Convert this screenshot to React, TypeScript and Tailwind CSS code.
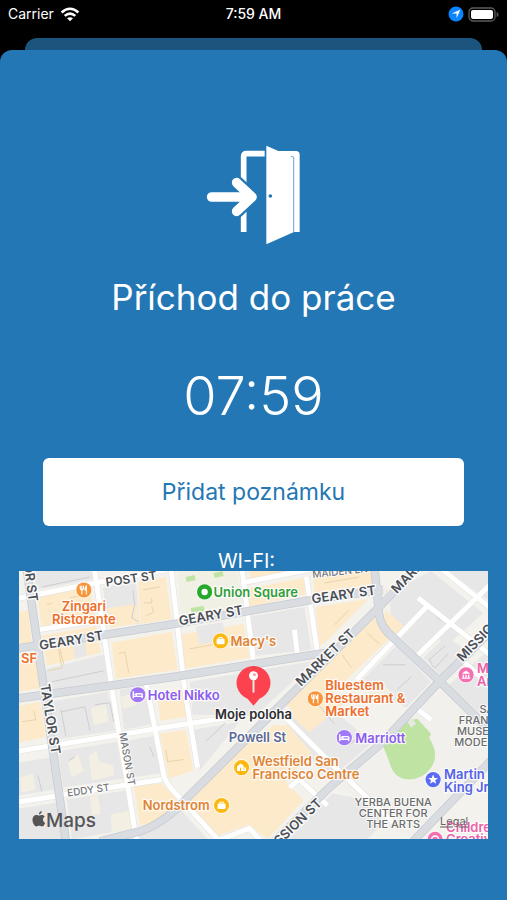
import type { ReactNode } from "react";

const roadLabels = [
  { text: "POST ST", x: 132, y: 583, angle: -8, size: 12 },
  { text: "GEARY ST", x: 72, y: 645, angle: -9, size: 13 },
  { text: "GEARY ST", x: 212, y: 620, angle: -10, size: 13 },
  { text: "GEARY ST", x: 345, y: 599, angle: -8, size: 13 },
  { text: "TAYLOR ST", x: 46, y: 720, angle: 81, size: 13 },
  { text: "TAYLOR ST", x: 24, y: 567, angle: 82, size: 13 },
  { text: "MARKET ST", x: 329, y: 661, angle: -44, size: 13 },
  { text: "MARKET ST", x: 424, y: 567, angle: -46, size: 13 },
  { text: "MISSION ST", x: 490, y: 635, angle: -46, size: 13 },
  { text: "MISSION ST", x: 296, y: 831, angle: -44, size: 13 },
];

const smallRoadLabels = [
  { text: "MASON ST", x: 124, y: 760, angle: 80, size: 10 },
  { text: "EDDY ST", x: 89, y: 794, angle: -8, size: 10 },
  { text: "MAIDEN LN", x: 341, y: 575, angle: -6, size: 10 },
];

const majorRoads = [
  "M27 571L66 842",
  "M15 649L175 624L330 597L384 590",
  "M15 699L175 677L332 652",
  "M100 842L140 832Q165 824 190 796L380 607L418 567",
  "M375 565L379 605Q379 622 388 632L441 682L495 735",
  "M493 630L440 682L383 743L330 788L272 845",
  "M493 760L414 842",
];

const minorRoads = [
  "M15 599L95 583L165 570",
  "M94 565L113 695L137 842",
  "M146 681L164 775Q166 784 176 794L220 842",
  "M171 565L185 690L198 768",
  "M242 565L254 662",
  "M307 577L318 652",
  "M242 583L312 569",
  "M295 630L298 655",
  "M15 752L175 726L235 717",
  "M15 803L162 780",
  "M38 630L102 620",
  "M284 716L330 762L370 800L395 824",
  "M357 680L430 604",
  "M419 598L495 658",
  "M440 567L495 611",
  "M418 656L495 581",
  "M463 660L495 690",
  "M414 706L432 720",
  "M290 788L300 780L328 806",
  "M216 842L250 829L262 842",
];

const MapPin = ({ x, y, color, children }: { x: number; y: number; color: string; children: ReactNode }) => (
  <g transform={`translate(${x} ${y})`}>
    <circle r="8.5" fill="#fff" opacity="0.7" />
    <circle r="7.6" fill={color} />
    {children}
  </g>
);

const ForkKnife = () => (
  <g stroke="#fff" strokeLinecap="round" fill="none">
    <path d="M-3.6 -4v2.6q0 1.2 1.6 1.2T-.4 -1.4V-4M-2 -4V4" strokeWidth="1.1" />
    <path d="M2.5 4V-4q-1.6 1-1.4 4h1.4" fill="#fff" strokeWidth="1.1" />
  </g>
);

const Bag = () => (
  <g>
    <rect x="-4" y="-2" width="8" height="5.4" rx="1" fill="#fff" />
    <path d="M-1.8 -2v-1.3h3.6v1.3" fill="none" stroke="#fff" />
  </g>
);

const Bed = () => (
  <path d="M-4.5 -3v6M-4.5 1.6h9M4.5 2.8V0q0-1-1-1h-5v2M-3 -.4h.3" stroke="#fff" strokeWidth="1.4" strokeLinecap="round" fill="none" />
);

const Museum = () => (
  <path d="M-4.3 -1L0 -4.2L4.3 -1ZM-3.4 0h1.5v3h-1.5zM-.7 0h1.4v3h-1.4zM1.9 0h1.5v3h-1.5zM-4.3 3h8.6v1h-8.6z" fill="#fff" />
);

const StreetMap = () => (
  <svg viewBox="19 571 470 269" className="block w-full font-['Inter','Liberation_Sans',sans-serif]" role="group" aria-label="Moje poloha">
    <rect x="19" y="571" width="470" height="269" fill="#f4f2ed" />

    {/* blocks */}
    <g fill="#e8e7e8">
      <path d="M33 571H91L94 579L36 590Z" />
      <path d="M103 588L136 580L140 625L108 618Z" />
      <path d="M46 669L104 655L109 682L43 692Z" />
      <path d="M50 702L108 692L115 731L55 740Z" />
      <path d="M120 690L143 686L154 724L124 730Z" />
      <path d="M58 752L117 742L124 779L63 788Z" />
      <path d="M126 741L156 736L161 774L131 778Z" />
      <path d="M19 763L50 758L55 790L19 796Z" />
      <path d="M19 809L57 803L62 840H19Z" />
      <path d="M67 800L126 791L132 829L72 840Z" />
      <path d="M250 617L305 607L312 650L257 656Z" />
      <path d="M190 682L316 661L256 716L193 715Z" />
      <path d="M194 730L240 722L200 771Z" />
      <path d="M391 600L409 583L432 571L484 613L448 646L420 624L392 630Z" />
      <path d="M448 571H489V600Z" />
      <path d="M402 638L428 612L449 632L420 657Z" />
      <path d="M362 681L397 646L432 682L407 708Z" />
      <path d="M424 658L446 637L476 655L442 676Z" />
      <path d="M450 685L489 651V716L480 713Z" />
      <path d="M290 712L310 690L373 743L330 780L287 730Z" />
      <path d="M169 797L208 840H116L150 833Z" />
      <path d="M333 794L361 799L385 822L368 840H287Z" />
    </g>
    <g fill="#f1f0ed">
      <path d="M416 712L445 689L489 733V756L412 838L380 826L396 811L338 790L388 744Z" />
    </g>
    <g fill="#f3efe2">
      <path d="M68 764L78 755L84 771L72 778Z" />
      <path d="M89 756L97 751L99 762L113 766L115 776L92 781Z" />
      <path d="M91 708L106 705L109 722L94 725Z" />
      <path d="M90 797L98 796L101 814L92 816Z" />
      <path d="M111 815L130 811L132 829L112 833Z" />
      <path d="M20 778L33 774L36 790L22 793Z" />
      <path d="M121 697L133 694L137 705L124 709Z" />
      <path d="M365 695L380 680L392 692L378 704Z" />
    </g>
    <g fill="#fceacb">
      <path d="M37 597L89 586L95 618L42 628Z" />
      <path d="M19 612L28 610L32 645L19 647Z" />
      <path d="M19 658L36 655L41 688L19 692Z" />
      <path d="M42 636L96 626L101 653L47 666Z" />
      <path d="M138 582L166 577L172 619L141 624Z" />
      <path d="M108 608L137 604L140 623L111 628Z" />
      <path d="M112 643L172 632L178 670L116 679Z" />
      <path d="M179 635L244 624L250 658L184 669Z" />
      <path d="M247 589L304 578L307 594L249 607Z" />
      <path d="M250 571H300L250 579Z" />
      <path d="M314 577L371 571L373 584L315 595Z" />
      <path d="M316 607L369 599L327 642L320 647Z" />
      <path d="M19 706L40 702L46 737L19 743Z" />
      <path d="M157 694L182 689L187 717L161 721Z" />
      <path d="M160 734L186 730L194 771L169 779Z" />
      <path d="M134 786L162 784L177 800L161 821L140 826Z" />
      <path d="M376 614L392 637L322 704L289 707L284 702Z" />
      <path d="M386 610L407 628L397 640L385 627Z" />
      <path d="M275 725L289 726L312 753L286 781L304 801L268 840L250 825L216 837L180 803L250 742Z" />
      <path d="M290 701L318 679L345 703L310 733L291 715Z" />
    </g>
    <path d="M178 571H237L245 613L182 624Z" fill="#f1f0e4" />
    <path d="M196 627L223 622L227 640L200 645Z" fill="#e8e7e8" />
    <path d="M72 637L84 635L87 656L75 659Z" fill="#e8e7e8" />
    <g fill="#bfe3a2">
      <path d="M186 577L195 575L196 580L187 582Z" />
      <path d="M214 573L223 571L224 576L215 578Z" />
      <path d="M191 608L204 606L205 611L192 613Z" />
      <path d="M408 721L418 719L432 734L430 738Q441 755 432 768Q424 780 409 780Q394 779 390 762L384 747Z" />
    </g>
    <path d="M408 722L413 719L417 724L412 728Z" fill="#e6e8e2" />

    {/* building outlines */}
    <g fill="none" stroke="#e9d3aa" strokeWidth="1">
      <path d="M58 645L62 668L48 671M59 646L64 665" />
      <path d="M143 590L160 587M144 603H152V598M146 616L154 612L152 606" />
      <path d="M119 654L125 652L129 673M70 598L84 595M47 605L52 603" />
      <path d="M190 649L240 640M258 594L285 590M325 583L360 577" />
      <path d="M368 633L380 644M343 655L352 668M166 750L168 762L184 760" />
      <path d="M22 722L36 720L34 711M335 625L350 610" />
    </g>
    <g fill="none" stroke="#cdcdd0" strokeWidth="1">
      <path d="M61 710L66 736M62 712L85 707L90 731M95 705L110 703L114 722M42 587L90 577" />
      <path d="M133 590L135 604L132 618L139 622M38 776L42 792M69 761L75 757" />
      <path d="M432 665L436 668L449 654M433 664L430 660L446 646M384 665H406M435 614L442 621" />
      <path d="M452 688L474 712M410 622L420 613M454 579L478 600M52 682L104 671M150 747L154 757" />
      <path d="M206 742L226 723M315 700L335 724M350 745L365 733M398 690L412 677" />
    </g>

    {/* streets */}
    <g fill="none" stroke="#e3e1dd" strokeWidth="6">
      {minorRoads.map((d) => (
        <path key={d} d={d} />
      ))}
    </g>
    <g fill="none" stroke="#fff" strokeWidth="5">
      {minorRoads.map((d) => (
        <path key={d} d={d} />
      ))}
    </g>
    <g fill="none" stroke="#c7cad0" strokeWidth="8.5" strokeLinejoin="round">
      {majorRoads.map((d) => (
        <path key={d} d={d} />
      ))}
    </g>
    <g fill="none" stroke="#d9dce1" strokeWidth="7" strokeLinejoin="round">
      {majorRoads.map((d) => (
        <path key={d} d={d} />
      ))}
    </g>
    <path d="M383 598L393 588L385 587Z" fill="#f1efea" />

    {/* street names */}
    <g fill="#4b4e54" stroke="#fff" strokeWidth="3" strokeOpacity="0.8" paintOrder="stroke" strokeLinejoin="round" textAnchor="middle" fontWeight="600">
      {roadLabels.map((l) => (
        <text key={`${l.text}${l.x}`} x={l.x} y={l.y} fontSize={l.size} transform={`rotate(${l.angle} ${l.x} ${l.y})`}>
          {l.text}
        </text>
      ))}
    </g>
    <g fill="#77787b" stroke="#fff" strokeWidth="2" strokeOpacity="0.8" paintOrder="stroke" strokeLinejoin="round" textAnchor="middle" fontWeight="500">
      {smallRoadLabels.map((l) => (
        <text key={l.text} x={l.x} y={l.y} fontSize={l.size} transform={`rotate(${l.angle} ${l.x} ${l.y})`}>
          {l.text}
        </text>
      ))}
    </g>

    {/* places */}
    <MapPin x={84} y={590} color="#f8953a"><ForkKnife /></MapPin>
    <MapPin x={316} y={699} color="#f8953a"><ForkKnife /></MapPin>
    <MapPin x={205} y={592} color="#27a92e"><circle r="3.2" fill="#fff" /></MapPin>
    <MapPin x={221} y={641} color="#fbb811"><Bag /></MapPin>
    <MapPin x={242} y={768} color="#fbb811">
      <path d="M-4.5 3.5V-1L-1 -4L2 -2V0H4.5V3.5Z" fill="#fff" />
      <path d="M-1 3.5V0M1.6 1.4H3" stroke="#fbb811" />
    </MapPin>
    <MapPin x={222} y={806} color="#fbb811"><Bag /></MapPin>
    <MapPin x={138} y={695} color="#a178f5"><Bed /></MapPin>
    <MapPin x={345} y={738} color="#a178f5"><Bed /></MapPin>
    <MapPin x={467} y={675} color="#f56fb4"><Museum /></MapPin>
    <MapPin x={436} y={840} color="#f56fb4"><circle r="3.5" fill="none" stroke="#fff" strokeWidth="1.5" /></MapPin>
    <MapPin x={434} y={780} color="#5c6cf2">
      <path d="M0 -5L1.4 -1.6L4.9 -1.5L2.1 .7L3.1 4.1L0 2.1L-3.1 4.1L-2.1 .7L-4.9 -1.5L-1.4 -1.6Z" fill="#fff" />
    </MapPin>

    <g fontSize="13" fontWeight="600" stroke="#fff" strokeWidth="2.5" strokeOpacity="0.8" paintOrder="stroke" strokeLinejoin="round">
      <g fill="#ec6f2b">
        <text textAnchor="middle">
          <tspan x="84" y="611">Zingari</tspan>
          <tspan x="84" y="624">Ristorante</tspan>
        </text>
        <text x="21" y="663">SF</text>
        <text>
          <tspan x="326" y="690">Bluestem</tspan>
          <tspan x="326" y="703">Restaurant &amp;</tspan>
          <tspan x="326" y="716">Market</tspan>
        </text>
      </g>
      <g fill="#de8434">
        <text x="231" y="646">Macy's</text>
        <text>
          <tspan x="253" y="766">Westfield San</tspan>
          <tspan x="253" y="779">Francisco Centre</tspan>
        </text>
        <text x="143" y="811">Nordstrom</text>
      </g>
      <text x="214" y="597" fill="#2f9e3b">Union Square</text>
      <g fill="#8b5cf0">
        <text x="148" y="700">Hotel Nikko</text>
        <text x="356" y="743">Marriott</text>
      </g>
      <g fill="#5563e8">
        <text>
          <tspan x="445" y="779">Martin Luther</tspan>
          <tspan x="445" y="792">King Jr.</tspan>
        </text>
      </g>
      <g fill="#ee62a8">
        <text>
          <tspan x="478" y="673">Museum</tspan>
          <tspan x="478" y="686">Art</tspan>
        </text>
        <text>
          <tspan x="447" y="833">Children's</tspan>
          <tspan x="447" y="845">Creativity</tspan>
        </text>
      </g>
      <text x="258" y="742" textAnchor="middle" fill="#5a6a96">Powell St</text>
    </g>

    <g fontSize="11" fontWeight="500" fill="#6c6c6c" stroke="#fff" strokeWidth="2" strokeOpacity="0.7" paintOrder="stroke" textAnchor="middle">
      <text>
        <tspan x="394" y="807">YERBA BUENA</tspan>
        <tspan x="394" y="818">CENTER FOR</tspan>
        <tspan x="394" y="829">THE ARTS</tspan>
      </text>
      <text>
        <tspan x="492" y="713">SAN</tspan>
        <tspan x="492" y="724">FRANCISCO</tspan>
        <tspan x="492" y="735">MUSEUM OF</tspan>
        <tspan x="492" y="746">MODERN ART</tspan>
      </text>
    </g>

    {/* current position */}
    <path d="M254 706L248 699A17 17 0 1 1 260 699Z" fill="#fb424e" />
    <path d="M254 676V692" stroke="#e6e6e6" strokeWidth="2" strokeLinecap="round" />
    <circle cx="254" cy="676" r="4.5" fill="#fff" />
    <circle cx="255" cy="675" r="1.5" fill="#f9a0a5" />
    <text x="254" y="719" textAnchor="middle" fontSize="13" fontWeight="600" fill="#2c2c2e" stroke="#fff" strokeWidth="2.5" strokeOpacity="0.8" paintOrder="stroke">
      Moje poloha
    </text>

    {/* attribution */}
    <g fill="#555">
      <path d="M39 816C40.5 816 41 815.2 42.5 815.5Q44 815.7 44.8 817Q42.8 818.3 43 820.5Q43.2 822.7 45.3 823.6Q44 827 42 827C41 827 40.5 826.400 39.2 826.4S37.4 827 36.5 827C34.3 827 32.5 823 32.5 820.3C32.5 817.3 34.4 815.5 36.3 815.5C37.5 815.5 38.2 816 39 816Z" />
      <path d="M39 815Q38.8 812.4 41.7 811.6Q42 814.3 39 815Z" />
      <text x="46" y="828" fontSize="19" fontWeight="500">Maps</text>
    </g>
    <a href="#legal">
      <text x="441" y="826" fontSize="11" fill="#666" textDecoration="underline">Legal</text>
    </a>
  </svg>
);

const StatusBar = () => (
  <div className="grid h-[38px] grid-cols-3 items-start px-2 pt-1 text-sm leading-5 text-white">
    <div className="flex items-center gap-1.5">
      <span>Carrier</span>
      <svg viewBox="0 0 20 15" className="h-[15px] w-5" fill="none" stroke="#fff" strokeWidth="2.6">
        <path d="M1.6 5.5Q10 -2 18.4 5.5" />
        <path d="M4.7 8.9Q10 4.2 15.3 8.9" />
        <path d="M10 14.3L7 11.3Q10 9 13 11.3Z" fill="#fff" stroke="none" />
      </svg>
    </div>
    <div className="text-center font-medium">7:59 AM</div>
    <div className="flex h-5 items-center justify-end gap-1">
      <svg viewBox="0 0 16 16" className="size-4">
        <circle cx="8" cy="8" r="7.5" fill="#0a84ff" />
        <path d="M12.3 3.8L8.6 12.2V7.6H3.6Z" fill="#fff" />
      </svg>
      <svg viewBox="0 0 31 15" className="h-[15px] w-[31px]">
        <rect x="1" y="1" width="26" height="13" rx="4" fill="none" stroke="#5c5c5e" strokeWidth="1.3" />
        <rect x="3" y="3" width="22" height="9" rx="2" fill="#fff" />
        <path d="M28.6 5Q30.5 5.5 30.5 7.5T28.6 10Z" fill="#5c5c5e" />
      </svg>
    </div>
  </div>
);

const DoorIcon = () => (
  <svg viewBox="50 45 285 300" className="h-[100px] w-[95px]" aria-hidden="true">
    <path d="M163 306V80Q163 71 172 71H226" fill="none" stroke="#fff" strokeWidth="17" />
    <g fill="none" strokeLinecap="round" strokeLinejoin="round">
      <path d="M67 201H190M142 158L188 201L142 244" stroke="#2377b4" strokeWidth="42" />
      <path d="M67 201H186M142 158L188 201L142 244" stroke="#fff" strokeWidth="29" />
    </g>
    <path d="M231 47L267 63H320Q331 63 331 74V306H314L231 343Z" fill="#fff" />
    <path d="M304 80H310Q313 80 313 84V306" fill="none" stroke="#2377b4" strokeWidth="2" />
    <circle cx="243" cy="198" r="5.5" fill="#2377b4" />
  </svg>
);

const App = () => {
  return (
    <div className="flex min-h-screen flex-col bg-black font-['Inter','Liberation_Sans',sans-serif]">
      <StatusBar />
      <div className="mx-[25px] h-3 rounded-t-xl bg-[#1b557e]" />
      <main className="flex flex-1 flex-col items-center rounded-t-xl bg-[#2377b4] px-[19px] pt-[95px] pb-[60px] text-white">
        <DoorIcon />
        <h1 className="mt-7 text-center text-[35px] leading-12">Příchod do práce</h1>
        <time className="mt-10 text-[54px] leading-[70px] font-light">07:59</time>
        <div className="mt-[27px] w-full px-6">
          <button type="button" className="h-[68px] w-full rounded-md bg-white text-[23px] text-[#2377b4]">
            Přidat poznámku
          </button>
        </div>
        <p className="mt-[23px] pr-3.5 text-xl leading-6">WI-FI:</p>
        <div className="-mt-0.5 w-full">
          <StreetMap />
        </div>
      </main>
    </div>
  );
};

export default App;
